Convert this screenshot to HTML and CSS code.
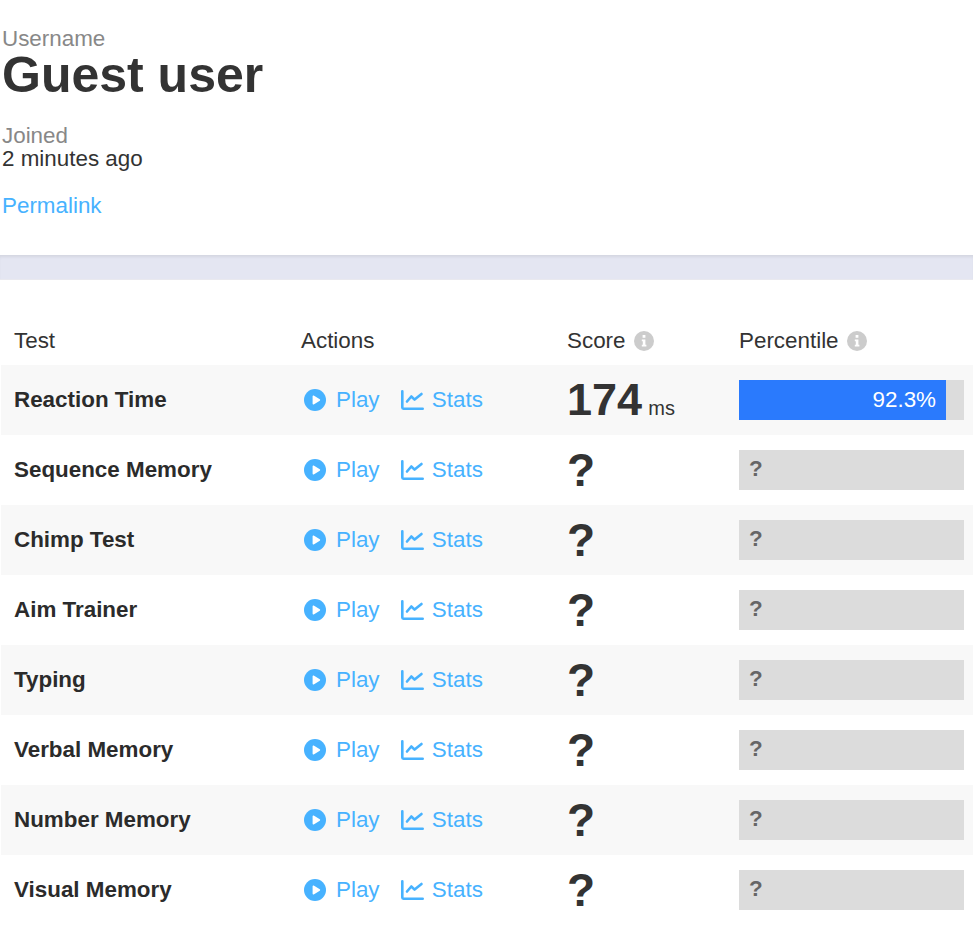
FILE: index.html
```html
<!DOCTYPE html>
<html lang="en">
<head>
    <meta charset="UTF-8">
    <meta name="viewport" content="width=device-width, initial-scale=1.0">
    <title>Profile</title>
    <link rel="stylesheet" href="styles.css">
</head>
<body>
    <svg class="icon-defs" width="0" height="0">
        <symbol id="icon-play" viewBox="0 0 22 22">
            <circle cx="11" cy="11" r="11"/>
            <path class="play-arrow" d="M8.6 7.2 C8.6 6.6 9.2 6.3 9.7 6.6 L15.8 10.3 C16.3 10.6 16.3 11.4 15.8 11.7 L9.7 15.4 C9.2 15.7 8.6 15.4 8.6 14.8 Z"/>
        </symbol>
        <symbol id="icon-stats" viewBox="0 0 23 20">
            <path class="stats-line" d="M1.3 1.3 V17.6 Q1.3 18.7 2.4 18.7 H21.7"/>
            <path class="stats-line" d="M6 11.5 L10.3 6.5 L13.6 9.6 L20.5 4"/>
        </symbol>
        <symbol id="icon-info" viewBox="0 0 20 20">
            <circle cx="10" cy="10" r="10"/>
            <path class="info-mark" d="M8.6 4 H11.4 V6.8 H8.6 Z M7.8 8.4 H11.4 V13.8 H12.4 V15.6 H7.8 V13.8 H8.8 V10.2 H7.8 Z"/>
        </symbol>
    </svg>

    <section class="profile">
        <div class="label">Username</div>
        <h1>Guest user</h1>
        <div class="label joined">Joined</div>
        <div class="joined-value">2 minutes ago</div>
        <a class="permalink" href="#">Permalink</a>
    </section>

    <div class="divider"></div>

    <table class="scores">
        <thead>
            <tr>
                <th class="col-test">Test</th>
                <th class="col-actions">Actions</th>
                <th class="col-score">Score <svg class="info"><use href="#icon-info"/></svg></th>
                <th class="col-percentile">Percentile <svg class="info"><use href="#icon-info"/></svg></th>
            </tr>
        </thead>
        <tbody>
            <tr>
                <td class="test-name">Reaction Time</td>
                <td class="actions">
                    <a href="#"><svg class="play"><use href="#icon-play"/></svg>Play</a>
                    <a href="#"><svg class="stats"><use href="#icon-stats"/></svg>Stats</a>
                </td>
                <td class="score"><span class="score-value">174</span> <span class="unit">ms</span></td>
                <td><div class="bar"><div class="bar-fill" style="width: 92%">92.3%</div></div></td>
            </tr>
            <tr>
                <td class="test-name">Sequence Memory</td>
                <td class="actions">
                    <a href="#"><svg class="play"><use href="#icon-play"/></svg>Play</a>
                    <a href="#"><svg class="stats"><use href="#icon-stats"/></svg>Stats</a>
                </td>
                <td class="score"><span class="score-value unknown">?</span></td>
                <td><div class="bar">?</div></td>
            </tr>
            <tr>
                <td class="test-name">Chimp Test</td>
                <td class="actions">
                    <a href="#"><svg class="play"><use href="#icon-play"/></svg>Play</a>
                    <a href="#"><svg class="stats"><use href="#icon-stats"/></svg>Stats</a>
                </td>
                <td class="score"><span class="score-value unknown">?</span></td>
                <td><div class="bar">?</div></td>
            </tr>
            <tr>
                <td class="test-name">Aim Trainer</td>
                <td class="actions">
                    <a href="#"><svg class="play"><use href="#icon-play"/></svg>Play</a>
                    <a href="#"><svg class="stats"><use href="#icon-stats"/></svg>Stats</a>
                </td>
                <td class="score"><span class="score-value unknown">?</span></td>
                <td><div class="bar">?</div></td>
            </tr>
            <tr>
                <td class="test-name">Typing</td>
                <td class="actions">
                    <a href="#"><svg class="play"><use href="#icon-play"/></svg>Play</a>
                    <a href="#"><svg class="stats"><use href="#icon-stats"/></svg>Stats</a>
                </td>
                <td class="score"><span class="score-value unknown">?</span></td>
                <td><div class="bar">?</div></td>
            </tr>
            <tr>
                <td class="test-name">Verbal Memory</td>
                <td class="actions">
                    <a href="#"><svg class="play"><use href="#icon-play"/></svg>Play</a>
                    <a href="#"><svg class="stats"><use href="#icon-stats"/></svg>Stats</a>
                </td>
                <td class="score"><span class="score-value unknown">?</span></td>
                <td><div class="bar">?</div></td>
            </tr>
            <tr>
                <td class="test-name">Number Memory</td>
                <td class="actions">
                    <a href="#"><svg class="play"><use href="#icon-play"/></svg>Play</a>
                    <a href="#"><svg class="stats"><use href="#icon-stats"/></svg>Stats</a>
                </td>
                <td class="score"><span class="score-value unknown">?</span></td>
                <td><div class="bar">?</div></td>
            </tr>
            <tr>
                <td class="test-name">Visual Memory</td>
                <td class="actions">
                    <a href="#"><svg class="play"><use href="#icon-play"/></svg>Play</a>
                    <a href="#"><svg class="stats"><use href="#icon-stats"/></svg>Stats</a>
                </td>
                <td class="score"><span class="score-value unknown">?</span></td>
                <td><div class="bar">?</div></td>
            </tr>
        </tbody>
    </table>
</body>
</html>
```

FILE: styles.css
```css
body {
    margin: 0;
    font-family: "Liberation Sans", Arial, sans-serif;
    font-size: 22.4px;
    color: #333;
    background-color: #fff;
}

a {
    color: #47b2ff;
    text-decoration: none;
}

.icon-defs {
    display: block;
}

.profile {
    height: 255px;
    padding: 26px 0 0 2px;
    box-sizing: border-box;
}

.label {
    color: #888;
    line-height: 25px;
}

h1 {
    margin: 0;
    font-size: 50px;
    line-height: 48px;
    font-weight: bold;
}

.joined {
    margin-top: 25px;
    line-height: 24px;
}

.joined-value {
    line-height: 22px;
}

.permalink {
    display: block;
    margin-top: 23px;
    line-height: 26px;
}

.divider {
    height: 25px;
    box-sizing: border-box;
    background-color: #e4e6f2;
    border-bottom: 1px solid #e9e9ef;
    box-shadow: inset 0 3px 3px -1px rgba(0, 0, 0, 0.07);
}

.scores {
    width: 972px;
    margin: 36px 0 0 1px;
    border-collapse: collapse;
    table-layout: fixed;
}

.scores th {
    height: 49px;
    padding: 0;
    text-align: left;
    font-weight: normal;
    vertical-align: middle;
}

.col-test {
    width: 287px;
}

.col-actions {
    width: 266px;
}

.col-score {
    width: 172px;
}

.scores th.col-test {
    padding-left: 13px;
}

.scores td {
    height: 70px;
    padding: 0;
}

.scores tbody tr:nth-child(odd) {
    background-color: #f8f8f8;
}

.scores .test-name {
    padding-left: 13px;
    font-weight: bold;
    color: #2b2b2b;
}

.actions a {
    margin-right: 15px;
}

.play {
    width: 22px;
    height: 22px;
    margin: 0 10px 0 3px;
    vertical-align: -4px;
    fill: #47b2ff;
}

.play-arrow {
    fill: #fff;
}

.stats {
    width: 23px;
    height: 20px;
    margin: 0 8px 0 0;
    vertical-align: -3px;
}

.stats-line {
    fill: none;
    stroke: #47b2ff;
    stroke-width: 2.6;
    stroke-linecap: round;
    stroke-linejoin: round;
}

.info {
    width: 20px;
    height: 20px;
    margin-left: 2px;
    vertical-align: -3px;
    fill: #ccc;
}

.info-mark {
    fill: #fff;
}

.score-value {
    font-size: 45px;
    font-weight: bold;
}

.unknown {
    font-size: 46px;
}

.unit {
    font-size: 20px;
}

.bar {
    width: 225px;
    height: 40px;
    padding-left: 10px;
    box-sizing: border-box;
    line-height: 38px;
    background-color: #dcdcdc;
    color: #666;
    font-weight: bold;
}

.bar:has(.bar-fill) {
    padding-left: 0;
}

.bar-fill {
    height: 40px;
    padding-right: 10px;
    box-sizing: border-box;
    line-height: 40px;
    background-color: #2a7afd;
    color: #fff;
    font-weight: normal;
    text-align: right;
}
```
